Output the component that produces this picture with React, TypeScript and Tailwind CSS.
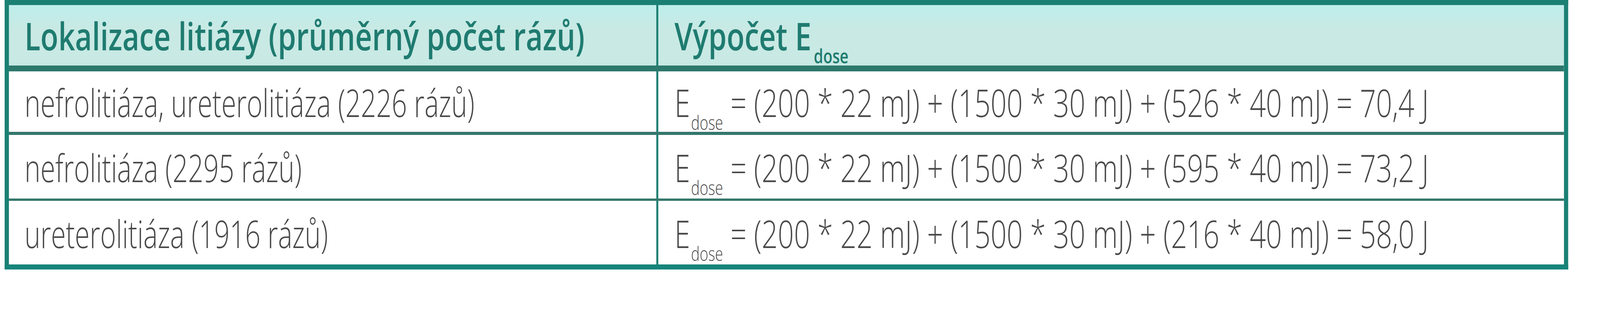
import React from "react";

const rows = [
  { h: "h-[155px]", pt: "pt-[31px]", left: "nefrolitiáza, ureterolitiáza (2226 rázů)", right: " = (200 * 22 mJ) + (1500 * 30 mJ) + (526 * 40 mJ) = 70,4 J", sep: "h-[8px]" },
  { h: "h-[163px]", pt: "pt-[35px]", left: "nefrolitiáza (2295 rázů)", right: " = (200 * 22 mJ) + (1500 * 30 mJ) + (595 * 40 mJ) = 73,2 J", sep: "h-[6px]" },
  { h: "h-[163px]", pt: "pt-[35px]", left: "ureterolitiáza (1916 rázů)", right: " = (200 * 22 mJ) + (1500 * 30 mJ) + (216 * 40 mJ) = 58,0 J", sep: "" },
];

export default function App() {
  // The page is designed for a 4827px wide frame; fit it horizontally to the actual viewport.
  const k = typeof window !== "undefined" ? Math.min(1, window.innerWidth / 4827) : 1;
  return (
    <div className="w-full h-[800px] overflow-hidden bg-white">
      <div
        className="w-[4827px] h-[800px] origin-top-left font-['Open_Sans',sans-serif]"
        style={{ transform: `scaleX(${k})` }}
      >
        <div className="ml-[14px] w-[4717px] border-[13px] border-[#1b8074] border-b-[#17847a]">
          {/* header */}
          <div className="flex h-[155px] bg-[linear-gradient(#bdeeeb,#c9e9e4_40%,#c8e9e4)]">
            <div className="w-[1953px] shrink-0 pl-[47px] pt-[30px]">
              <span className="inline-block origin-left scale-x-[0.91] whitespace-nowrap text-[97px] leading-none font-semibold text-[#1f7b70]">
                Lokalizace litiázy (průměrný počet rázů)
              </span>
            </div>
            <div className="w-[6px] shrink-0 bg-[#1e7e72]" />
            <div className="w-[2732px] shrink-0 pl-[49px] pt-[30px]">
              <span className="inline-block origin-left scale-x-[0.91] whitespace-nowrap text-[97px] leading-none font-semibold text-[#1f7b70]">
                Výpočet E<span className="text-[50px] align-[-33px] ml-[8px]">dose</span>
              </span>
            </div>
          </div>
          <div className="h-[15px] bg-[#2d786c]" />
          {rows.map((r, i) => (
            <React.Fragment key={i}>
              <div className={`flex ${r.h} bg-white`}>
                <div className={`w-[1953px] shrink-0 pl-[47px] ${r.pt}`}>
                  <span className="inline-block origin-left scale-x-[0.84] whitespace-nowrap text-[97px] leading-none font-light text-[#4a4a4a]">
                    {r.left}
                  </span>
                </div>
                <div className="w-[6px] shrink-0 bg-[#1e7e72]" />
                <div className={`w-[2732px] shrink-0 pl-[49px] ${r.pt}`}>
                  <span className="inline-block origin-left scale-x-[0.88] whitespace-nowrap text-[97px] leading-none font-light text-[#4a4a4a]">
                    E<span className="text-[50px] align-[-33px] ml-[3px]">dose</span>
                    {r.right}
                  </span>
                </div>
              </div>
              {r.sep && <div className={`${r.sep} bg-[#35776c]`} />}
            </React.Fragment>
          ))}
        </div>
      </div>
    </div>
  );
}
